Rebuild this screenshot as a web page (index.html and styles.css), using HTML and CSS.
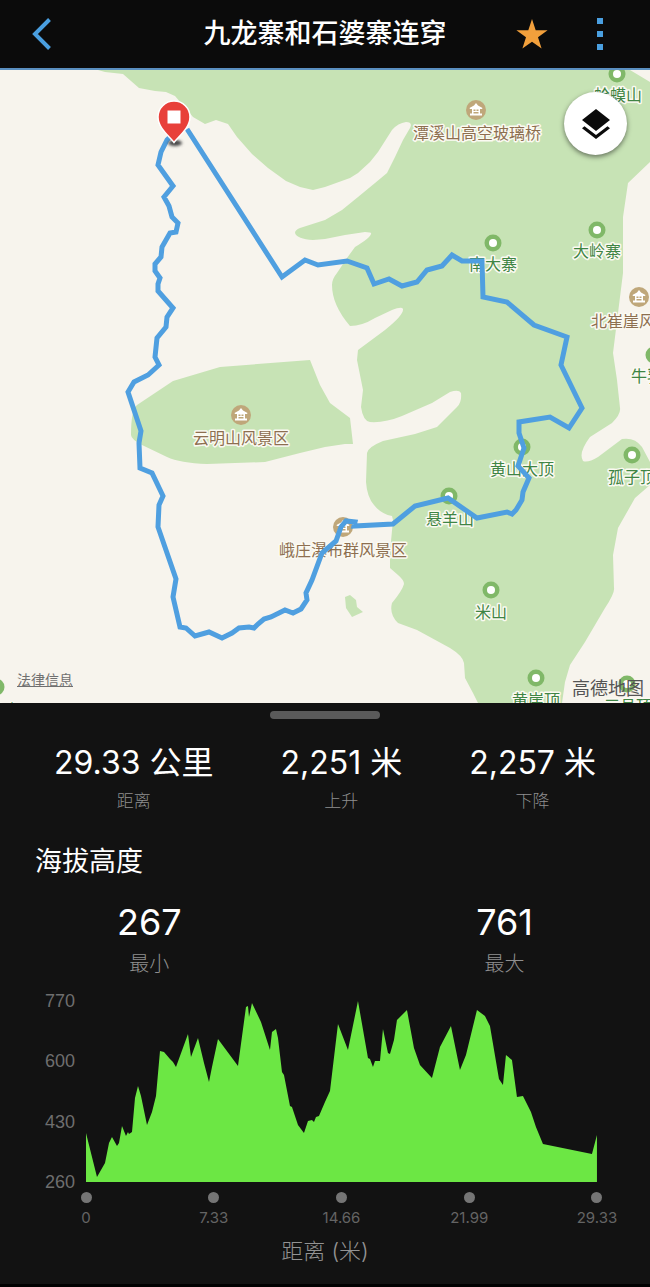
FILE: index.html
```html
<!DOCTYPE html>
<html lang="zh-CN">
<head>
  <meta charset="utf-8">
  <meta name="viewport" content="width=device-width,initial-scale=1.0">
  <title>九龙寨和石婆寨连穿</title>
  <link rel="stylesheet" href="styles.css">
</head>
<body>
  <!-- Top bar -->
  <header class="topbar">
    <button class="icon-button" type="button" aria-label="返回">
      <svg width="20" height="32" viewBox="0 0 20 32"><path d="M17.500 1.500 3 16 17.500 30.500" fill="none" stroke="#4a9fe0" stroke-width="4"/></svg>
    </button>
    <h1 class="topbar-title">九龙寨和石婆寨连穿</h1>
    <div class="topbar-actions">
      <button class="icon-button" type="button" aria-label="收藏">
        <svg width="32" height="30" viewBox="0 0 32 30"><path d="M16 0 19.700 11.200 31.600 11.300 22 18.300 25.600 29.600 16 22.700 6.400 29.600 10 18.300 .4 11.300 12.300 11.200Z" fill="#f2a03c"/></svg>
      </button>
      <button class="icon-button" type="button" aria-label="更多">
        <svg width="8" height="32" viewBox="0 0 8 32" fill="#4a9fe0"><path d="M1 0h6v6H1zM1 13h6v6H1zM1 26h6v6H1z"/></svg>
      </button>
    </div>
  </header>

  <main>
    <!-- Map -->
    <section class="map" aria-label="地图">
      <svg class="map-canvas" viewBox="0 70 650 633" preserveAspectRatio="xMidYMid slice">
        <defs>
          <g id="peak">
            <circle r="8.500" fill="#80b868"/>
            <circle r="4" fill="#fff"/>
          </g>
          <g id="scenic">
            <circle r="10" fill="#bfa77a"/>
            <path d="M0-7 2-4.500 6.500-2 6-1H4V3.500H6V5.500H-6V3.500H-4V-1H-6L-6.500-2-2-4.500Z" fill="#fff"/>
            <path d="M-2.500-.5h2v1.500h-2zM.5-.5h2v1.500h-2zM-2.500 2h5v1.500h-5z" fill="#bfa77a"/>
          </g>
          <filter id="blur" x="-50%" y="-100%" width="200%" height="300%"><feGaussianBlur stdDeviation="1.500"/></filter>
        </defs>

        <!-- woodland -->
        <g fill="#c7e3b5">
          <path d="M98 70 105 72 123 74 139 88 155 91 166 92 175 96 193 117 205 124 216 120 228 124 237 137 252 154 268 168 286 181 300 187 313 190 325 187 350 178 358 173 370 162 378 152 392 130Q398 123 406 122 413 122 410 128L403 140 395 157 387 173 375 183 358 197 342 210 325 220 300 228Q295 230 295 233 297 239 313 240L325 239 345 235 365 232Q372 232 371 234 370 238 355 247L347 258 337 273Q332 279 332 285 332 305 350 326 362 326 375 318L392 310Q402 306 403 309 404 315 385 330L358 350 357 360 363 390 361 407Q363 421 370 422 385 423 402 416L432 403 450 392Q459 389 461 393 462 402 457 407L437 427 415 434 383 441Q368 447 367 453L366 482Q367 497 374 505 381 514 392 516L393 520 390 552 390 568 398 575Q404 580 404 584 402 591 392 603 389 614 398 623L417 630 450 648Q463 656 464 663L465 678 473 693 478 703H562L565 682 570 665 585 642 605 608Q615 593 614 588L613 555 618 528 635 498 650 485V462L642 447Q635 437 622 439L598 457Q588 463 583 461 578 453 590 437L612 423Q621 414 620 408L617 380 613 353 620 297 623 273V217L628 183 650 162V82L630 70Z"/>
          <path d="M310 360 320 385 330 403 350 418 353 444H345L325 447 300 453 265 462 207 464Q180 463 167 457L142 445Q131 439 131 435 131 410 137 405L173 381 220 367Z"/>
          <path d="M345 597 350 595 356 600 357 607 363 612 352 617 346 608Z"/>
        </g>

        <!-- places -->
        <use href="#scenic" x="476" y="110"/>
        <use href="#peak" x="617" y="74"/>
        <use href="#peak" x="597" y="230"/>
        <use href="#peak" x="493" y="243"/>
        <use href="#scenic" x="639" y="297"/>
        <use href="#peak" x="654" y="355"/>
        <use href="#scenic" x="241" y="415"/>
        <use href="#peak" x="522" y="447"/>
        <use href="#peak" x="632" y="455"/>
        <use href="#peak" x="449" y="496"/>
        <use href="#scenic" x="343" y="527"/>
        <use href="#peak" x="491" y="590"/>
        <use href="#peak" x="536" y="678"/>
        <use href="#peak" x="627" y="684"/>
        <use href="#peak" x="-4" y="687"/>

        <g class="place place-scenic">
          <text x="477" y="139">潭溪山高空玻璃桥</text>
          <text x="639" y="327">北崔崖风景区</text>
          <text x="241" y="444">云明山风景区</text>
          <text x="343" y="556">峨庄瀑布群风景区</text>
        </g>
        <g class="place place-peak">
          <text x="618" y="101">蛤蟆山</text>
          <text x="597" y="257">大岭寨</text>
          <text x="493" y="270">南大寨</text>
          <text x="655" y="382">牛乳山</text>
          <text x="522" y="475">黄山大顶</text>
          <text x="632" y="483">孤子顶</text>
          <text x="450" y="525">悬羊山</text>
          <text x="491" y="618">米山</text>
          <text x="536" y="706">黄崖顶</text>
          <text x="628" y="712">三县顶</text>
          <text x="-4" y="716">青云山</text>
        </g>

        <!-- track -->
        <polyline class="track" points="174,133 167,140 161,152 158,165 173,186 164,197 169,206 172,217 178,223 176,232 170,233 162,247 161,257 155,264 155,271 160,278 158,284 158,291 173,308 167,317 166,327 157,338 155,357 159,365 148,375 134,382 128,392 141,431 139,443 140,468 152,473 163,496 159,505 158,527 176,579 173,597 180,627 186,628 195,636 209,632 222,638 232,633 239,628 249,627 254,628 258,624 264,619 271,617 285,610 293,613 301,609 307,600 306,593 312,580 322,553 336,541 341,527 346,521 355,522 354,526 393,524 415,506 448,498 477,518 507,512 512,514 516,510 522,500 523,492 529,478 518,466 520,460 524,448 519,433 519,422 550,417 569,428 582,408 561,365 567,337 534,325 507,302 483,297 482,261 462,261 452,255 442,266 427,270 417,282 402,286 389,279 374,284 367,268 347,261 318,265 305,260 282,277 187,129"/>

        <!-- finish pin -->
        <ellipse cx="175" cy="143" rx="7" ry="3" fill="#444" filter="url(#blur)"/>
        <path d="M174 142.500C169 136 158 128 158 117a16 16 0 0 1 32 0C190 128 179 136 174 142.500Z" fill="#e8403a" stroke="#fff" stroke-width="1.500"/>
        <path d="M167.500 110.500h13v13h-13z" fill="#fff"/>
      </svg>

      <button class="layers-button" type="button" aria-label="图层">
        <svg width="28" height="30" viewBox="0 0 28 30" fill="#0b0b0b"><path d="M14 0 28 11 14 22 0 11ZM2.500 17.200 14 26 25.500 17.200 28 19.200 14 30 0 19.200Z"/></svg>
      </button>
      <a class="legal" href="#">法律信息</a>
      <span class="map-brand">高德地图</span>
    </section>

    <!-- Details sheet -->
    <section class="sheet">
      <div class="handle"></div>

      <dl class="stats totals">
        <div class="stat">
          <dt>距离</dt>
          <dd>29.33 公里</dd>
        </div>
        <div class="stat">
          <dt>上升</dt>
          <dd>2,251 米</dd>
        </div>
        <div class="stat">
          <dt>下降</dt>
          <dd>2,257 米</dd>
        </div>
      </dl>

      <h2 class="sheet-title">海拔高度</h2>

      <dl class="stats range">
        <div class="stat">
          <dt>最小</dt>
          <dd>267</dd>
        </div>
        <div class="stat">
          <dt>最大</dt>
          <dd>761</dd>
        </div>
      </dl>

      <div class="chart">
        <div class="y-axis">
          <span>770</span>
          <span>600</span>
          <span>430</span>
          <span>260</span>
        </div>
        <div class="plot">
          <svg class="profile" viewBox="0 0 511 181" preserveAspectRatio="none">
            <polygon fill="#6ce744" points="0,181 0,132 11,176 19,162 23,142 26,136 31,145 33,142 36,125 40,135 42,131 43,133 46,131 49,97 52,85 55,95 61,124 66,111 70,95 74,50 78,51 84,58 87,61 90,66 102,33 105,56 112,37 118,62 123,81 126,66 132,38 152,65 160,6 162,5 163,16 166,2 175,21 184,49 186,31 190,28 192,37 196,71 198,74 204,105 206,106 212,124 218,132 222,120 226,119 228,121 230,116 233,115 239,101 244,90 252,23 262,49 272,0 282,57 284,58 287,66 289,60 294,60 297,28 302,52 304,53 308,39 311,19 321,9 328,47 334,64 346,77 354,46 365,25 374,69 380,54 391,9 399,15 404,25 413,78 417,84 420,54 426,59 431,96 437,95 445,111 450,126 457,143 506,153 511,134 511,181"/>
          </svg>
          <ol class="x-axis">
            <li>0</li>
            <li>7.33</li>
            <li>14.66</li>
            <li>21.99</li>
            <li>29.33</li>
          </ol>
        </div>
      </div>
      <p class="x-title">距离 (米)</p>
    </section>
  </main>
</body>
</html>
```

FILE: styles.css
```css
* {
  box-sizing: border-box;
}

body {
  margin: 0;
  background: #000;
  color: #fff;
  font-family: Inter, 'Noto Sans CJK SC', sans-serif;
}

h1, h2, p, dl, dd, ol {
  margin: 0;
  padding: 0;
}

svg {
  display: block;
}

button {
  padding: 0;
  border: 0;
  background: none;
  cursor: pointer;
}

/* Top bar */
.topbar {
  display: grid;
  grid-template-columns: 1fr auto 1fr;
  align-items: center;
  height: 70px;
  padding: 0 32px;
  border-bottom: 2px solid #5a8fc0;
  background: #0b0b0b;
}

.topbar-title {
  font-size: 27px;
  font-weight: 500;
  line-height: 40px;
}

.topbar-actions {
  display: flex;
  justify-content: flex-end;
  align-items: center;
  gap: 48px;
  padding-right: 14px;
}

/* Map */
.map {
  position: relative;
  overflow: hidden;
  background: #f7f4ed;
}

.map-canvas {
  width: 100%;
}

.place {
  font-size: 16px;
  text-anchor: middle;
  stroke: #fbfaf2;
  stroke-width: 3px;
  stroke-linejoin: round;
  paint-order: stroke;
}

.place-peak {
  fill: #3f8544;
}

.place-scenic {
  fill: #8d6f50;
}

.track {
  fill: none;
  stroke: #4f9fe0;
  stroke-width: 5px;
  stroke-linejoin: miter;
}

.layers-button {
  position: absolute;
  top: 22px;
  right: 23px;
  display: flex;
  justify-content: center;
  align-items: center;
  width: 63px;
  height: 63px;
  border-radius: 50%;
  background: #fff;
  box-shadow: 0 2px 5px rgba(0, 0, 0, 0.5);
}

.legal {
  position: absolute;
  left: 17px;
  bottom: 13px;
  color: #707070;
  font-size: 14px;
  line-height: 20px;
}

.map-brand {
  position: absolute;
  right: 6px;
  bottom: 2px;
  color: #555;
  font-size: 18px;
  line-height: 24px;
}

/* Details sheet */
.sheet {
  padding: 8px 0 18px;
  background: #121212;
}

.handle {
  width: 110px;
  height: 8px;
  margin: 0 auto;
  border-radius: 4px;
  background: #5a5a5a;
}

.stats {
  display: flex;
  justify-content: space-between;
}

.stat {
  display: flex;
  flex-direction: column-reverse;
  align-items: center;
}

.stat dt {
  color: #8f8f8f;
  font-weight: 300;
}

.totals {
  padding: 20px 54px 0;
}

.totals dt {
  font-size: 17px;
  line-height: 28px;
}

.totals dd {
  font-size: 32px;
  line-height: 48px;
}

.sheet-title {
  margin-top: 25px;
  padding: 0 35px;
  font-size: 27px;
  font-weight: 400;
  line-height: 44px;
}

.range {
  padding: 14px 18% 0;
}

.range dt {
  font-size: 20px;
  line-height: 36px;
}

.range dd {
  font-size: 36px;
  line-height: 48px;
}

/* Elevation chart */
.chart {
  display: flex;
  gap: 11px;
  margin-top: 9px;
  padding: 0 53px 0 45px;
}

.y-axis {
  display: flex;
  flex-direction: column;
  justify-content: space-between;
  height: 201px;
  color: #6e6e6e;
  font-family: 'Liberation Sans', sans-serif;
  font-size: 18px;
  line-height: 20px;
}

.plot {
  flex: 1;
  padding-top: 10px;
}

.profile {
  width: 100%;
  height: 181px;
}

.x-axis {
  display: flex;
  justify-content: space-between;
  margin-top: 10px;
  list-style: none;
  color: #646464;
  font-size: 15px;
  line-height: 20px;
}

.x-axis li {
  display: flex;
  flex-direction: column;
  align-items: center;
  gap: 5px;
  width: 0;
}

.x-axis li::before {
  content: '';
  width: 11px;
  height: 11px;
  border-radius: 50%;
  background: #757575;
}

.x-title {
  margin-top: 8px;
  color: #939393;
  font-size: 22px;
  font-weight: 300;
  line-height: 30px;
  text-align: center;
}
```
